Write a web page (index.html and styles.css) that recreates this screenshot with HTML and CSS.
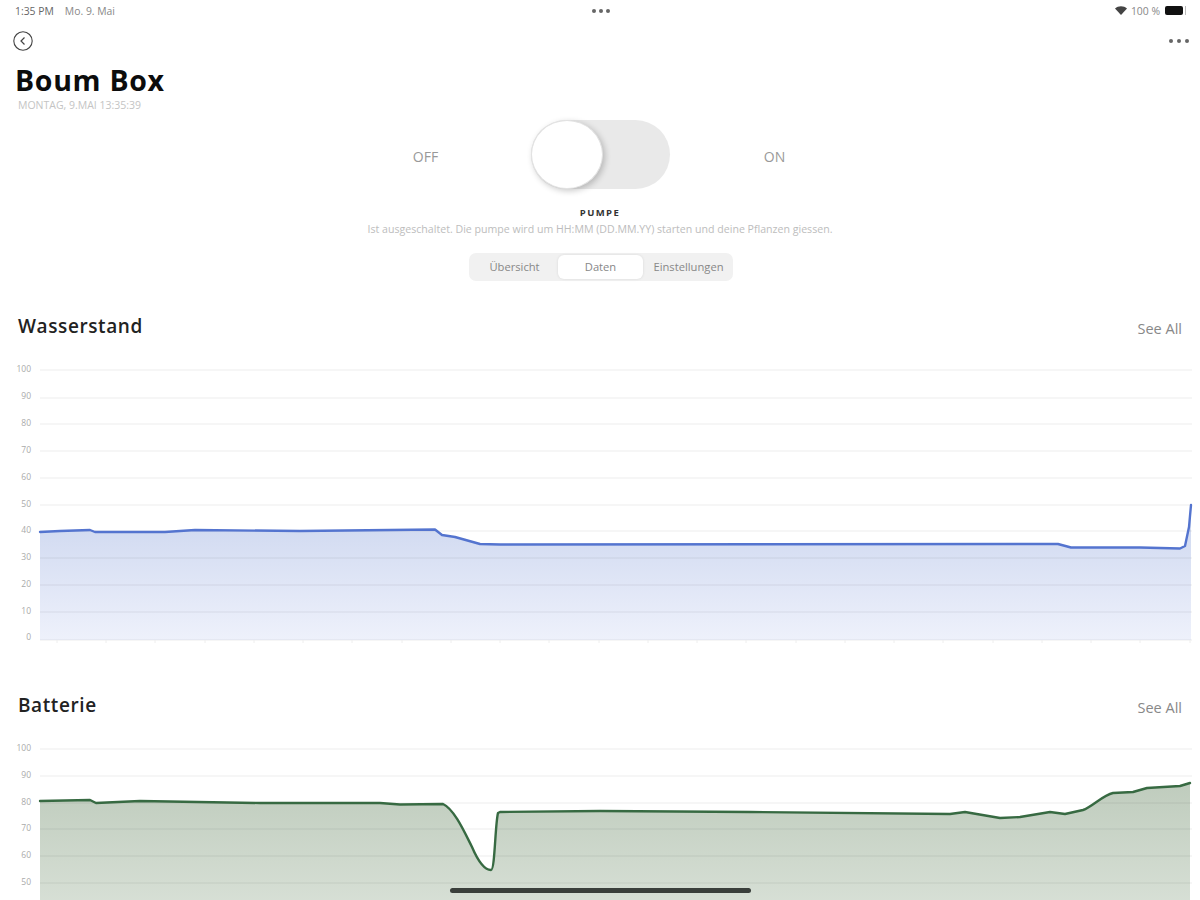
FILE: index.html
```html
<!DOCTYPE html>
<html lang="de">
<head>
<meta charset="utf-8">
<title>Boum Box</title>
<link rel="stylesheet" href="styles.css">
</head>
<body>
<div class="page">
  <div class="status">
    <div class="status-left"><span class="time">1:35 PM</span><span>Mo. 9. Mai</span></div>
    <div class="dots status-dots"><i></i><i></i><i></i></div>
    <div class="status-right">
      <svg class="wifi" width="12" height="9" viewBox="0 0 12 9"><path d="M6 9 0 2.6C3.4-.6 8.6-.6 12 2.6Z" fill="#444"/></svg>
      <span>100 %</span>
      <span class="battery"><span class="battery-level"></span></span>
    </div>
  </div>
  <div class="nav">
    <svg width="20" height="20" viewBox="0 0 20 20" fill="none" stroke="#444"><circle cx="10" cy="10" r="9.2" stroke-width="1.1"/><path d="M11.5 6.5 8 10l3.5 3.5" stroke-width="1.2"/></svg>
    <div class="dots nav-dots"><i></i><i></i><i></i></div>
  </div>
  <h1 class="title">Boum Box</h1>
  <div class="subtitle">MONTAG, 9.MAI 13:35:39</div>
  <div class="control">
    <span class="control-label">OFF</span>
    <div class="toggle"><div class="knob"></div></div>
    <span class="control-label">ON</span>
  </div>
  <div class="pump">PUMPE</div>
  <div class="desc">Ist ausgeschaltet. Die pumpe wird um HH:MM (DD.MM.YY) starten und deine Pflanzen giessen.</div>
  <div class="tabs-wrap">
    <div class="tabs">
      <span class="tab">Übersicht</span>
      <span class="tab tab-active">Daten</span>
      <span class="tab">Einstellungen</span>
    </div>
  </div>

  <section class="section section-water">
    <div class="section-head"><h2>Wasserstand</h2><span class="see-all">See All</span></div>
    <svg class="chart" width="1200" height="290" viewBox="0 0 1200 290">
      <defs><linearGradient id="blueFill" x1="0" y1="0" x2="0" y2="1"><stop offset="0" stop-color="#ccd6ef"/><stop offset="1" stop-color="#eef1fb"/></linearGradient></defs>
      <path class="area" fill="url(#blueFill)" d="M40 172 60 171 90 170 95 172 165 172 195 170 300 171 435 169.5 442 175 455 177 480 184 500 184.5 1058 184 1071 187.5 1140 187.5 1180 188.5 1185 186 1189 167 1191 145V280H40Z"/>
      <g class="grid"><path d="M40 10H1192M40 38H1192M40 64H1192M40 91H1192M40 118H1192M40 145H1192M40 171H1192M40 198H1192M40 225H1192M40 252H1192M40 280H1192"/></g>
      <path class="ticks" d="M57 280v3M106 280v3M155 280v3M205 280v3M254 280v3M303 280v3M352 280v3M402 280v3M451 280v3M500 280v3M549 280v3M599 280v3M648 280v3M697 280v3M746 280v3M796 280v3M845 280v3M894 280v3M943 280v3M993 280v3M1042 280v3M1091 280v3M1140 280v3M1190 280v3"/>
      <path class="line line-blue" d="M40 172 60 171 90 170 95 172 165 172 195 170 300 171 435 169.5 442 175 455 177 480 184 500 184.5 1058 184 1071 187.5 1140 187.5 1180 188.5 1185 186 1189 167 1191 145"/>
      <g class="labels">
        <text x="31" y="12">100</text><text x="31" y="39">90</text><text x="31" y="66">80</text><text x="31" y="93">70</text><text x="31" y="120">60</text><text x="31" y="147">50</text><text x="31" y="173">40</text><text x="31" y="200">30</text><text x="31" y="227">20</text><text x="31" y="254">10</text><text x="31" y="280">0</text>
      </g>
    </svg>
  </section>

  <section class="section section-battery">
    <div class="section-head"><h2>Batterie</h2><span class="see-all">See All</span></div>
    <svg class="chart" width="1200" height="290" viewBox="0 0 1200 290">
      <defs><linearGradient id="greenFill" x1="0" y1="0" x2="0" y2="1"><stop offset="0" stop-color="#bfccbd"/><stop offset="1" stop-color="#eef2ed"/></linearGradient></defs>
      <path class="area" fill="url(#greenFill)" d="M40 62 90 61 96 64 140 62 260 64 380 64 400 65.5 443 65C454 70 464 92 472 108 478 122 484 131 491 131 495 131 495 86 498 74 500 73 500 73 500 73L600 72 750 73 950 75 965 73 1000 79 1020 78 1050 73 1065 75 1083 71C1092 68 1103 56 1113 54L1133 53 1147 49 1180 47 1190 44V280H40Z"/>
      <g class="grid"><path d="M40 10H1192M40 37H1192M40 64H1192M40 90H1192M40 117H1192M40 144H1192"/></g>
      <path class="line line-green" d="M40 62 90 61 96 64 140 62 260 64 380 64 400 65.5 443 65C454 70 464 92 472 108 478 122 484 131 491 131 495 131 495 86 498 74 500 73 500 73 500 73L600 72 750 73 950 75 965 73 1000 79 1020 78 1050 73 1065 75 1083 71C1092 68 1103 56 1113 54L1133 53 1147 49 1180 47 1190 44"/>
      <g class="labels">
        <text x="31" y="12">100</text><text x="31" y="39">90</text><text x="31" y="66">80</text><text x="31" y="92">70</text><text x="31" y="119">60</text><text x="31" y="146">50</text>
      </g>
    </svg>
  </section>
  <div class="home-bar"></div>
</div>
</body>
</html>
```
FILE: styles.css
```css
* { box-sizing: border-box; }
html, body { margin: 0; padding: 0; background: #fff; }
body { font-family: "Open Sans", "Liberation Sans", sans-serif; color: #333; }
.page { position: relative; width: 1200px; height: 900px; overflow: hidden; background: #fff; }

.status { height: 20px; padding: 1px 14px 0 15px; display: grid; grid-template-columns: 1fr auto 1fr; align-items: center; font-size: 10.4px; color: #888; }
.status-left { display: flex; gap: 11px; }
.time { color: #666; }
.status-right { display: flex; justify-content: flex-end; align-items: center; gap: 4px; }
.battery { display: block; width: 21px; height: 9px; margin-left: 1px; border-right: 1px solid #bbb; padding-right: 2px; }
.battery-level { display: block; height: 100%; background: #111; border-radius: 2px; }
.dots { display: flex; gap: 3px; }
.dots i { display: block; width: 4px; height: 4px; border-radius: 50%; background: #666; }
.status-dots { margin-top: 1px; }

.nav { margin-top: 11px; height: 20px; padding: 0 11px 0 13px; display: flex; justify-content: space-between; align-items: center; }
.nav-dots { gap: 4px; }

.title { margin: 11px 0 0 15px; font-size: 28.5px; line-height: 36px; font-weight: 700; color: #0c0c0c; letter-spacing: 0.7px; }
.subtitle { margin: 1px 0 0 18px; font-size: 10.5px; line-height: 12px; color: #c4c4c4; }

.control { margin-top: 9px; display: flex; justify-content: center; align-items: center; gap: 55px; padding-left: 1px; }
.control-label { width: 100px; padding-top: 4px; padding-right: 1px; text-align: center; font-size: 14px; color: #999; }
.toggle { width: 139px; height: 69px; border-radius: 35px; background: #e9e9e9; }
.knob { width: 72px; height: 69px; border-radius: 50%; background: #fff; border: 1px solid #e2e2e2; box-shadow: 2px 2px 6px rgba(0,0,0,.22); }

.pump { margin-top: 18px; text-align: center; font-size: 9.5px; line-height: 12px; font-weight: 700; letter-spacing: 1.4px; color: #333; }
.desc { margin-top: 4px; text-align: center; font-size: 10.6px; line-height: 12px; color: #bdbdbd; }

.tabs-wrap { margin-top: 18px; padding-left: 2px; display: flex; justify-content: center; }
.tabs { width: 264px; height: 28px; padding: 2px; display: flex; align-items: stretch; background: #f1f1f1; border-radius: 7px; }
.tab { display: flex; align-items: center; justify-content: center; flex: 0 0 87px; padding-bottom: 1px; font-size: 11.2px; color: #888; white-space: nowrap; }
.tab-active { flex: 0 0 85px; background: #fff; border-radius: 6px; box-shadow: 0 0 3px rgba(0,0,0,.1); }
.tab:last-child { flex: 1; padding-left: 3px; }

.section-water { margin-top: 33px; }
.section-battery { margin-top: 43px; }
.section-head { height: 24px; padding: 0 18px; display: flex; justify-content: space-between; align-items: center; }
.section-head h2 { margin: 0; font-size: 19px; line-height: 24px; font-weight: 600; color: #222; letter-spacing: 0.6px; }
.see-all { margin-top: 4px; font-size: 14.5px; color: #888; }
.chart { display: block; margin-top: 22px; }

.grid path { fill: none; stroke: #000; stroke-opacity: .07; stroke-width: 1; }
.ticks { fill: none; stroke: #eee; }
.line { fill: none; stroke-width: 2.4; stroke-linejoin: round; stroke-linecap: round; }
.line-blue { stroke: #5474cf; }
.line-green { stroke: #376a42; }
.labels text { font-size: 8.5px; fill: #aaa; text-anchor: end; }

.home-bar { position: absolute; left: 450px; bottom: 7px; width: 301px; height: 5px; border-radius: 3px; background: #3a3f3b; }
```
